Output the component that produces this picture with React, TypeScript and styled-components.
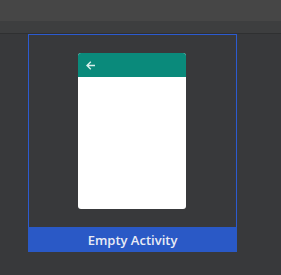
import * as React from 'react';
import styled, { createGlobalStyle } from 'styled-components';

const GlobalStyle = createGlobalStyle`
	html, body {
		margin: 0;
		padding: 0;
		background: #38393b;
		font-family: 'Open Sans', 'Liberation Sans', sans-serif;
	}
`;

const Page = styled.div`
	width: 281px;
	height: 275px;
	background: #38393b;
	display: flex;
	flex-direction: column;
	overflow: hidden;
`;

const TitleBar = styled.div`
	height: 21px;
	background: #464646;
`;

const SubBar = styled.div`
	height: 12px;
	background: #3d3e3f;
	border-bottom: 1px solid #2f3031;
`;

const Body = styled.div`
	padding-left: 28px;
`;

const TemplateTile = styled.div`
	width: 209px;
	display: flex;
	flex-direction: column;
`;

const Preview = styled.div`
	height: 193px;
	border: 1px solid #2c5bd0;
	border-bottom: none;
	box-sizing: border-box;
	padding-top: 18px;
	display: flex;
	justify-content: center;
`;

const Phone = styled.div`
	width: 108px;
	height: 156px;
	background: #ffffff;
	border-radius: 3px;
	overflow: hidden;
	margin-right: 2px;
`;

const AppBar = styled.div`
	height: 24px;
	background: #0a8a7b;
	display: flex;
	align-items: center;
	padding-left: 7px;
`;

const Label = styled.div<{ selected?: boolean }>`
	height: 25px;
	background: ${p => (p.selected ? '#2a59c6' : 'transparent')};
	color: #e9ecf5;
	font-size: 13px;
	font-weight: 600;
	display: flex;
	align-items: center;
	justify-content: center;
`;

const BackArrow = () => (
	<svg width="11" height="11" viewBox="0 0 11 11">
		<path d="M10 5.5H2M5.8 1.7L2 5.5L5.8 9.3" stroke="#d9f0ec" strokeWidth="1.4" fill="none" />
	</svg>
);

export default function App() {
	return (
		<Page>
			<GlobalStyle />
			<TitleBar />
			<SubBar />
			<Body>
				<TemplateTile>
					<Preview>
						<Phone>
							<AppBar>
								<BackArrow />
							</AppBar>
						</Phone>
					</Preview>
					<Label selected>Empty Activity</Label>
				</TemplateTile>
			</Body>
		</Page>
	);
}
